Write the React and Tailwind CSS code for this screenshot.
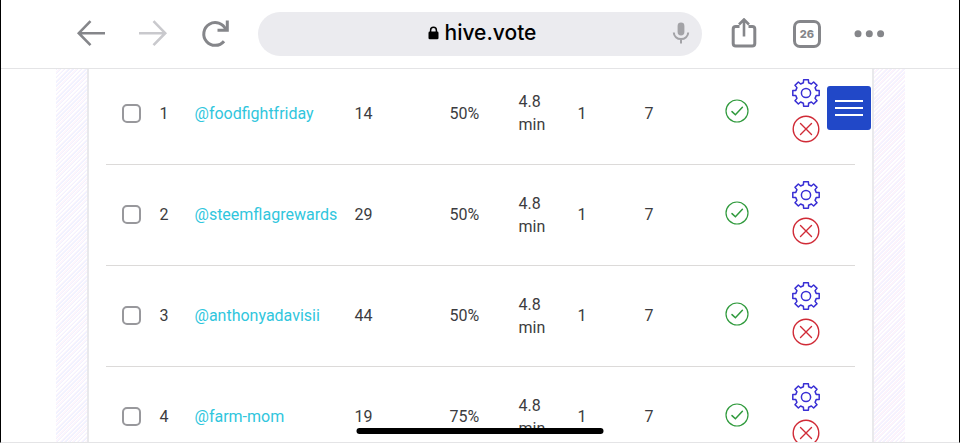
import { useState } from 'react'

const rows = [
  { id: 1, name: 'foodfightfriday', followers: 14, scale: '50%', wait: '4.8 min', daily: 1, weekly: 7 },
  { id: 2, name: 'steemflagrewards', followers: 29, scale: '50%', wait: '4.8 min', daily: 1, weekly: 7 },
  { id: 3, name: 'anthonyadavisii', followers: 44, scale: '50%', wait: '4.8 min', daily: 1, weekly: 7 },
  { id: 4, name: 'farm-mom', followers: 19, scale: '75%', wait: '4.8 min', daily: 1, weekly: 7 },
]

// outline of an eight-toothed cog centred on 0,0
const cogPath = () => {
  const points = []
  for (let i = 0; i < 8; i++) {
    const a = (i * Math.PI) / 4
    const tooth = [[-2.6, -10.2], [-2.4, -13.2], [2.4, -13.2], [2.6, -10.2]]
    tooth.forEach(([x, y]) => {
      points.push(
        `${(x * Math.cos(a) - y * Math.sin(a)).toFixed(2)} ${(x * Math.sin(a) + y * Math.cos(a)).toFixed(2)}`
      )
    })
  }
  return `M${points.join('L')}Z`
}

const Gear = () => (
  <svg viewBox="-14 -14 28 28" className="w-7 h-7" fill="none" stroke="#392fd4" strokeWidth="1.5" strokeLinejoin="round">
    <path d={cogPath()} />
    <circle r="4.6" />
  </svg>
)

const Cross = () => (
  <svg viewBox="0 0 28 28" className="w-7 h-7" fill="none" stroke="#d02a36" strokeWidth="1.4" strokeLinecap="round">
    <circle cx="14" cy="14" r="12.8" />
    <path d="M8.5 8.5l11 11M19.5 8.5l-11 11" />
  </svg>
)

const Check = () => (
  <svg viewBox="0 0 24 24" className="w-6 h-6" fill="none" stroke="#2f9a3c" strokeWidth="1.2" strokeLinecap="round">
    <circle cx="12" cy="12" r="11" />
    <path d="M7 12.6l3.4 3.2 7-7.6" strokeWidth="1.5" />
  </svg>
)

const Toolbar = () => {
  const [url, setUrl] = useState('hive.vote')

  return (
    <header className="flex items-center gap-[27px] px-[74px] py-3 bg-white border-b border-[#e4e4e6] text-[#85868a]">
      <div className="flex gap-[30px]">
        <button aria-label="Back" className="cursor-pointer">
          <svg viewBox="0 0 32 32" className="w-8 h-8" fill="none" stroke="currentColor" strokeWidth="2.6">
            <path d="M30 15.2H4M15.5 3.2L3.8 15.2l11.7 12" />
          </svg>
        </button>
        <button aria-label="Forward" className="text-[#c9c9cd]">
          <svg viewBox="0 0 32 32" className="w-8 h-8" fill="none" stroke="currentColor" strokeWidth="2.6">
            <path d="M2 15.2h26M16.5 3.2l11.7 12-11.7 12" />
          </svg>
        </button>
        <button aria-label="Reload" className="cursor-pointer">
          <svg viewBox="0 0 32 32" className="w-8 h-8" fill="none" stroke="currentColor" strokeWidth="3">
            <path d="M25 23.2A11.4 11.4 0 1 1 26.8 11.8" />
            <path d="M28.3 2.5v9.7H18.5" />
          </svg>
        </button>
      </div>

      <div className="relative flex flex-1 items-center justify-center h-11 pl-1 pb-0.5 rounded-full bg-[#ebebef]">
        <label className="flex items-center gap-[6px] text-black">
          <svg viewBox="0 0 11 14" className="w-[11px] h-[14px]" role="img" aria-label="Address">
            <rect x="0.5" y="5.6" width="10" height="7.6" rx="1.3" />
            <path d="M2.6 6V4.2a2.9 2.9 0 0 1 5.8 0V6" fill="none" stroke="currentColor" strokeWidth="1.5" />
          </svg>
          <input
            type="text"
            value={url}
            onChange={(e) => setUrl(e.target.value)}
            className="field-sizing-content font-[Inter,sans-serif] text-[21px] leading-7 font-medium outline-none"
          />
        </label>
        <button aria-label="Voice search" className="absolute right-3 text-[#a3a3a7] cursor-pointer">
          <svg viewBox="0 0 18 24" className="w-[18px] h-6" fill="none" stroke="currentColor" strokeWidth="2">
            <rect x="5.6" y="1.5" width="6.8" height="13" rx="3.4" fill="currentColor" stroke="none" />
            <path d="M1.8 11.5a7.2 6.6 0 0 0 14.4 0M9 18v4.6" />
          </svg>
        </button>
      </div>

      <div className="flex gap-[30px]">
        <button aria-label="Share" className="cursor-pointer">
          <svg viewBox="0 0 32 32" className="w-8 h-8" fill="none" stroke="currentColor" strokeWidth="3">
            <path d="M10.5 8.4H6.8A2.6 2.6 0 0 0 4.2 11v14.4a2.6 2.6 0 0 0 2.6 2.6h16.4a2.6 2.6 0 0 0 2.6-2.6V11a2.6 2.6 0 0 0-2.6-2.6H19.5" />
            <path d="M15 18.5V1.500M10 6.500l5-5 5 5" strokeWidth="2.6" />
          </svg>
        </button>
        <button aria-label="Open tabs" className="flex w-8 h-8 items-center justify-center cursor-pointer">
          <span className="flex w-7 h-7 items-center justify-center rounded-[7px] border-[3px] border-current font-[Inter,sans-serif] text-[11px] font-extrabold">
            26
          </span>
        </button>
        <button aria-label="More" className="cursor-pointer">
          <svg viewBox="0 0 32 32" className="w-8 h-8" fill="currentColor">
            <circle cx="5" cy="15.7" r="3.5" />
            <circle cx="16.3" cy="15.7" r="3.5" />
            <circle cx="27.6" cy="15.7" r="3.5" />
          </svg>
        </button>
      </div>
    </header>
  )
}

const App = () => {
  return (
    <div className="relative flex flex-col h-screen overflow-hidden bg-white border-x border-x-black border-b border-b-[#e4e4e6] font-[Roboto,sans-serif]">
      <Toolbar />

      <main className="relative flex-1 min-h-0 overflow-hidden">
        <div className="flex max-w-[849px] mx-auto">
          <div className="w-[31px] shrink-0 bg-[repeating-linear-gradient(135deg,#f1f2ff_0px,#f1f2ff_1px,#ffffff_1px,#ffffff_2px,#fdf5fc_2px,#fdf5fc_3px)]" />
          <div className="flex-1 px-[17px] bg-white border-x-2 border-[#e9e9ec]">
            <table className="w-full -mt-1.5 table-fixed text-left text-base leading-[23px] text-[#3c3c40]">
              <colgroup>
                <col className="w-[54px]" />
                <col className="w-[35px]" />
                <col className="w-[160px]" />
                <col className="w-[95px]" />
                <col className="w-[69px]" />
                <col className="w-[59px]" />
                <col className="w-[67px]" />
                <col className="w-[80px]" />
                <col className="w-[67px]" />
                <col />
              </colgroup>
              <tbody>
                {rows.map((row) => (
                  <tr key={row.id} className="h-[101px] border-b border-[#dcdad9]">
                    <td>
                      <input
                        type="checkbox"
                        aria-label={`Select ${row.name}`}
                        className="block ml-4 w-[19px] h-[19px] appearance-none rounded-[5px] border-2 border-[#98989c] bg-white checked:bg-[#98989c]"
                      />
                    </td>
                    <td>{row.id}</td>
                    <td>
                      <a href={`#${row.name}`} className="text-[#30c6dd]">@{row.name}</a>
                    </td>
                    <td>{row.followers}</td>
                    <td>{row.scale}</td>
                    <td className="pr-6">{row.wait}</td>
                    <td>{row.daily}</td>
                    <td>{row.weekly}</td>
                    <td className="pb-1"><Check /></td>
                    <td>
                      <div className="flex flex-col gap-2 pb-1">
                        <button aria-label={`Settings for ${row.name}`} className="w-7 cursor-pointer"><Gear /></button>
                        <button aria-label={`Remove ${row.name}`} className="w-7 cursor-pointer"><Cross /></button>
                      </div>
                    </td>
                  </tr>
                ))}
              </tbody>
            </table>
          </div>
          <div className="w-[31px] shrink-0 bg-[repeating-linear-gradient(135deg,#f4f2ff_0px,#f4f2ff_1px,#ffffff_1px,#ffffff_2px,#fdf3fb_2px,#fdf3fb_3px)]" />
        </div>

        <button
          aria-label="Menu"
          className="absolute top-[17px] right-[88px] flex flex-col items-center justify-center gap-[5px] w-11 h-11 rounded-[3px] bg-[#2148c8] cursor-pointer"
        >
          <span className="w-7 h-0.5 bg-white" />
          <span className="w-7 h-0.5 bg-white" />
          <span className="w-7 h-0.5 bg-white" />
        </button>
      </main>

      <div className="absolute bottom-2 left-1/2 -translate-x-1/2 w-[247px] h-[6px] rounded-full bg-black" />
    </div>
  )
}

export default App
